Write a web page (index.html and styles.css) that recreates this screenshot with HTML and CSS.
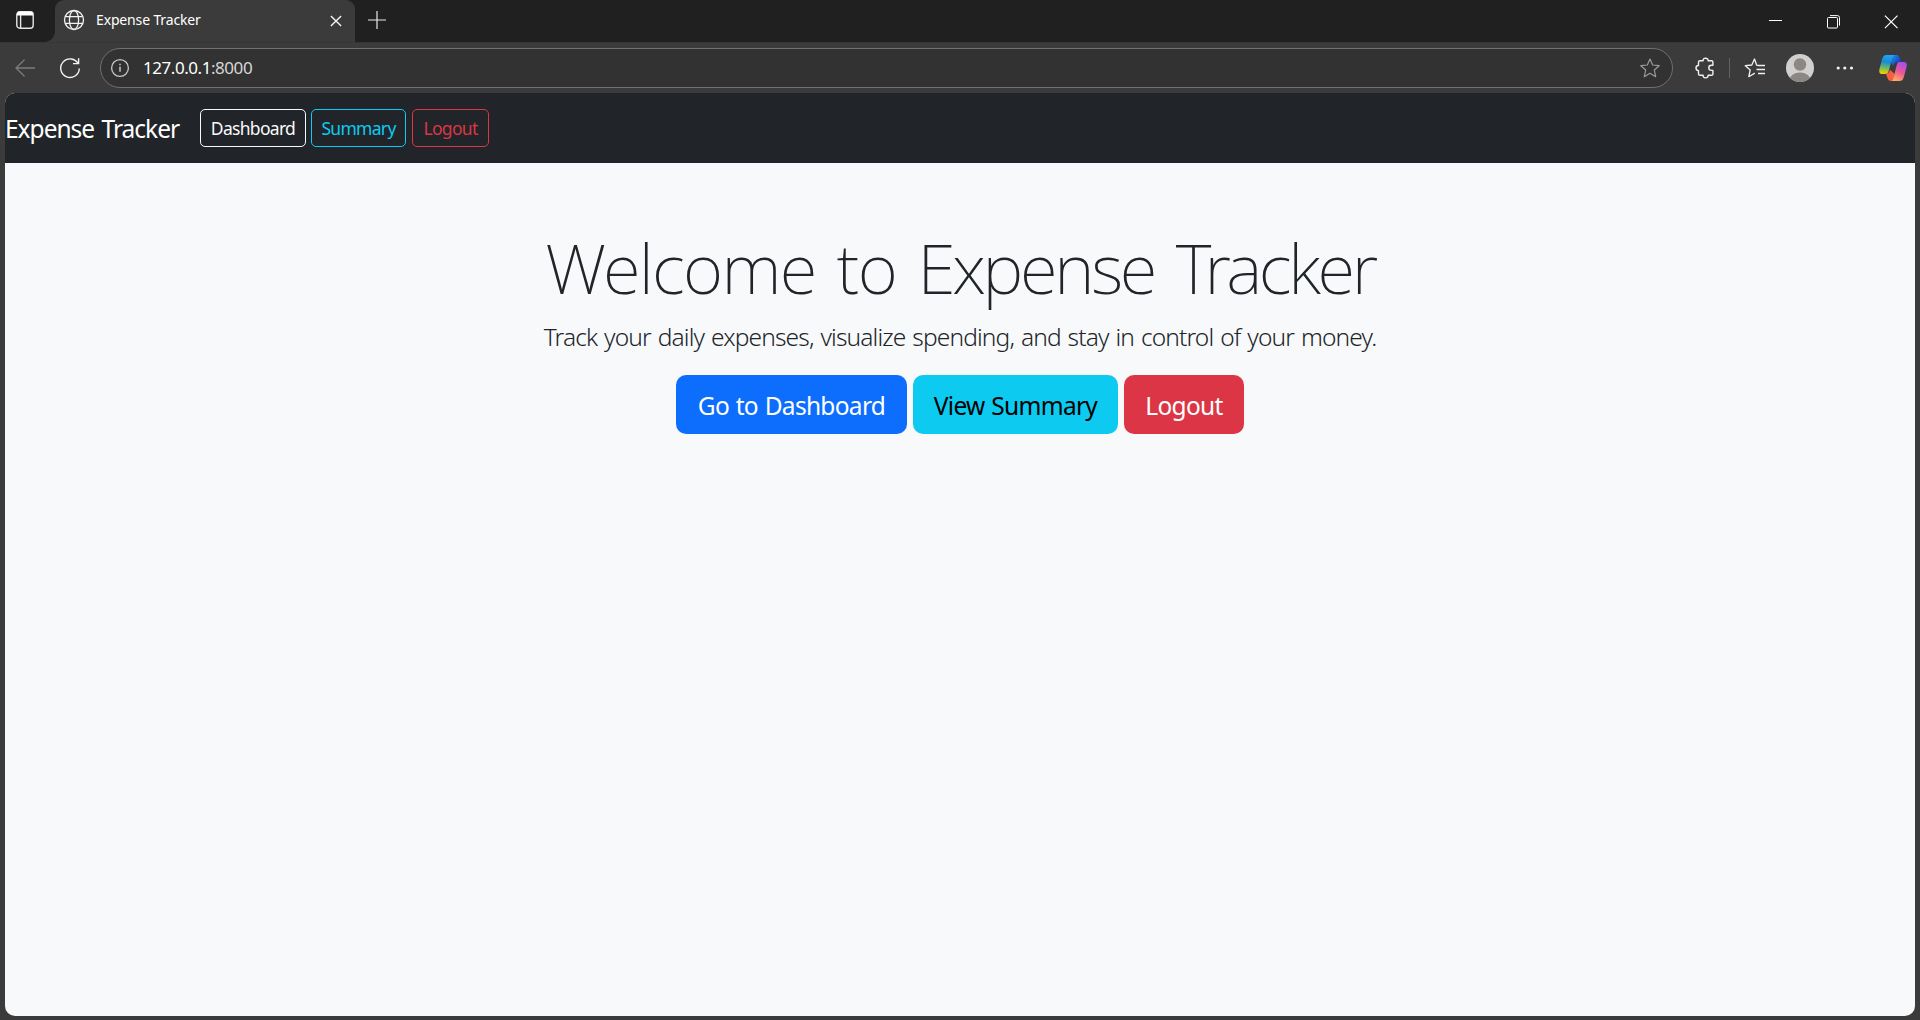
FILE: index.html
```html
<!DOCTYPE html>
<html lang="en">
<head>
<meta charset="utf-8">
<title>Expense Tracker</title>
<link rel="stylesheet" href="styles.css">
</head>
<body>
<div class="window">
  <div class="tabstrip">
    <div class="workspace">
      <svg width="18" height="18" viewBox="0 0 18 18" fill="none" stroke="#e6e6e6" stroke-width="1.4"><rect x=".8" y=".8" width="16.4" height="16.4" rx="3"/><path d="M1 3.3h16M1.500 2h15" stroke="#fff" stroke-width="2.600"/><path d="M4.600 4v13"/></svg>
    </div>
    <div class="tab">
      <svg class="globe" width="22" height="22" viewBox="0 0 22 22" fill="none" stroke="#f2f2f2" stroke-width="1.3"><circle cx="11" cy="11" r="9.5"/><ellipse cx="11" cy="11" rx="4.6" ry="9.5"/><path d="M2.3 7.6h17.4M2.3 14.4h17.4"/></svg>
      <span class="tab-title">Expense Tracker</span>
      <svg class="tab-close" width="12" height="12" viewBox="0 0 12 12" stroke="#f5f5f5" stroke-width="1.4"><path d="M.9.9l10.2 10.2M11.1.9L.9 11.1"/></svg>
    </div>
    <svg class="new-tab" width="18" height="18" viewBox="0 0 18 18" stroke="#e8e8e8" stroke-width="1.2"><path d="M9 0v18M0 9h18"/></svg>
    <div class="controls">
      <svg width="14" height="14" viewBox="0 0 14 14" stroke="#fff"><path d="M1 5.5h13"/></svg>
      <svg width="14" height="14" viewBox="0 0 14 14" fill="none" stroke="#fff"><rect x="1.500" y="2.500" width="10" height="10.500" rx="1"/><path d="M4 .6h7.500a2 2 0 0 1 2 2v8"/></svg>
      <svg width="14" height="14" viewBox="0 0 14 14" stroke="#fff" stroke-width="1.2"><path d="M.9.6l12.600 12.600M13.500.6L.9 13.200"/></svg>
    </div>
  </div>
  <div class="toolbar">
    <svg class="back" width="20" height="18" viewBox="0 0 20 18" fill="none" stroke="#7c7c7c" stroke-width="1.3"><path d="M20 9H1M9.5.7L1 9l8.500 8.300"/></svg>
    <svg class="reload" width="22" height="22" viewBox="0 0 22 22" fill="none" stroke="#f2f2f2" stroke-width="1.4"><path d="M19.300 7A9.300 9.300 0 1 0 20.300 11.500M14 6.600h5.600V1.200"/></svg>
    <div class="address">
      <svg width="20" height="20" viewBox="0 0 20 20" fill="none" stroke="#c8c8c8" stroke-width="1.300"><circle cx="10" cy="10" r="8.400"/><path d="M10 8.800v5M10 5.800v1.500" stroke-width="1.500"/></svg>
      <span class="url">127.0.0.1<span class="port">:8000</span></span>
      <svg width="20" height="20" viewBox="0 0 20 20" fill="none" stroke="#9a9a9a" stroke-width="1.200" stroke-linejoin="round"><path d="M10 1l2.700 6 6.500.7-4.900 4.300 1.400 6.700L10 15.300l-5.700 3.400 1.400-6.700L.8 7.700l6.500-.7z"/></svg>
    </div>
    <div class="actions">
      <svg width="20" height="22" viewBox="0 0 20 22" fill="none" stroke="#f0f0f0" stroke-width="1.400" stroke-linejoin="round"><path d="M3.500 5.200c0-.8.500-1.400 1.400-1.400h3.200C8 2 9 1.200 10.600 1.200S13.200 2 13.100 3.800h3.500c.8 0 1.300.5 1.300 1.400v3h-1.400c-1.700 0-2.700 1-2.700 2.600s1 2.600 2.700 2.600h1.400v3.500c0 .8-.5 1.400-1.300 1.400h-3.500c.1 1.800-.9 2.600-2.500 2.600s-2.600-.8-2.500-2.600H4.900c-.9 0-1.400-.6-1.400-1.400v-3.300C1.800 13.500 1 12.400 1 11s.8-2.500 2.500-2.500z"/></svg>
      <span class="divider"></span>
      <svg class="favorites" width="22" height="20" viewBox="0 0 22 20" fill="none" stroke="#f0f0f0" stroke-width="1.300" stroke-linejoin="round"><path d="M14.500 7.500l-1.800-.3L10.500 1 7.800 7l-6.500.7 4.900 4.300-1.400 6.700 6-3.600M14 7.500h7M12.500 11.500H21M14 15.500h7"/></svg>
      <svg class="avatar" width="28" height="28" viewBox="0 0 28 28"><defs><clipPath id="round"><circle cx="14" cy="14" r="14"/></clipPath></defs><g clip-path="url(#round)"><path fill="#d2d0ce" d="M0 0h28v28H0z"/><circle cx="14" cy="10.500" r="6.200" fill="#8b8785"/><ellipse cx="14" cy="26" rx="10.500" ry="7.500" fill="#8b8785"/></g></svg>
      <svg class="more" width="18" height="4" viewBox="0 0 18 4" fill="#f0f0f0"><circle cx="2.200" cy="2" r="1.600"/><circle cx="8.800" cy="2" r="1.600"/><circle cx="15.500" cy="2" r="1.600"/></svg>
      <svg class="copilot" width="28" height="26" viewBox="0 0 28 26">
        <defs>
          <linearGradient id="blue" x1="0" y1="0" x2=".9" y2=".5"><stop stop-color="#25b8ee"/><stop offset="1" stop-color="#1747c9"/></linearGradient>
          <linearGradient id="left" x1=".4" y1="0" x2=".3" y2="1"><stop stop-color="#21a5f5"/><stop offset=".35" stop-color="#168bd8"/><stop offset=".7" stop-color="#76bd58"/><stop offset="1" stop-color="#ffd000"/></linearGradient>
          <linearGradient id="right" x1=".7" y1="0" x2=".3" y2="1"><stop stop-color="#a34ff2"/><stop offset=".5" stop-color="#ee5793"/><stop offset="1" stop-color="#ffb05c"/></linearGradient>
        </defs>
        <path fill="url(#blue)" d="M7 0h10c3 0 3.600 2 4.400 4.500L22 7h-3c-3 0-4 1.500-5 4l-1.500-3z"/>
        <path fill="#f65f40" d="M6 18.800c3 0 4.500-1.500 5-4l3.500 3L16 20l-2 6h-2c-3 0-3.500-2.500-5-7.200z"/>
        <path fill="url(#left)" d="M7.500 0H16c-2 .5-2.700 2.500-3.500 5.500L10 15c-.8 3-2 4-4.500 4H3c-2.500 0-3.200-2-2.500-5L3 4.500C3.800 1.500 5 0 7.500 0z"/>
        <path fill="url(#right)" d="M20.500 7H25c2.600 0 3.300 2 2.500 5L25 21.500c-.8 3-2 4.500-4.500 4.500H12c2 0 2-1.500 2.700-4L17.500 11c.7-2.800 1-4 3-4z"/>
      </svg>
    </div>
  </div>
  <div class="page">
    <nav class="navbar">
      <span class="brand">Expense Tracker</span>
      <a class="btn btn-light">Dashboard</a>
      <a class="btn btn-info">Summary</a>
      <a class="btn btn-danger">Logout</a>
    </nav>
    <main class="hero">
      <h1>Welcome to <span class="product">Expense Tracker</span></h1>
      <p>Track your daily expenses, visualize spending, and stay in control of your money.</p>
      <div class="cta-row">
        <a class="cta cta-primary">Go to Dashboard</a>
        <a class="cta cta-info">View Summary</a>
        <a class="cta cta-danger">Logout</a>
      </div>
    </main>
  </div>
</div>
</body>
</html>
```
FILE: styles.css
```css
* { box-sizing: border-box; }
body { margin: 0; font-family: "Noto Sans", "Open Sans", sans-serif; white-space: nowrap; }
svg { display: block; flex: none; }
.window { width: 1920px; height: 1020px; background: #3b3b3b; display: flex; flex-direction: column; overflow: hidden; }
.tabstrip { height: 42px; background: #202020; display: flex; flex: none; }
.workspace { width: 55px; padding: 11px 0 0 16px; background: radial-gradient(circle at 0 0, #202020 9.5px, #3b3b3b 10px) 45px 32px / 10px 10px no-repeat; }
.tab { width: 300px; height: 42px; background: #3b3b3b; border-radius: 9px 9px 0 0; display: flex; align-items: center; padding: 0 13px 2px 8px; }
.tab-title { flex: 1; margin: -1px 0 0 11px; color: #fff; font-size: 14px; letter-spacing: -.15px; }
.tab-close { margin-top: 1px; }
.new-tab { margin: 11px 0 0 13px; }
.controls { margin-left: auto; display: flex; gap: 44px; padding: 15px 22px 0 0; }
.toolbar { height: 51px; flex: none; display: flex; align-items: center; padding: 0 12px 0 15px; border-top: 1px solid #363636; background: radial-gradient(circle at 10px 0, transparent 10px, transparent) no-repeat; }
.reload { margin-left: 24px; }
.address { width: 1573px; height: 40px; margin-left: 19px; border: 1px solid #707070; border-radius: 20px; background: #323232; display: flex; align-items: center; padding: 0 12px 0 9px; }
.url { flex: 1; margin: -1px 0 0 13px; color: #fff; font-size: 17px; letter-spacing: -.45px; }
.port { color: #d6d6d6; }
.actions { display: flex; align-items: center; margin-left: 22px; }
.divider { width: 1px; height: 20px; margin: 0 15px 0 14px; background: #626262; }
.favorites { margin-left: -1px; }
.avatar { margin-left: 20px; }
.more { margin-left: 22px; }
.copilot { margin-left: 25px; }
.page { width: 1910px; height: 922.5px; margin-left: 5px; border-radius: 10px; overflow: hidden; background: #f8f9fb; }
.navbar { height: 70px; background: #212529; display: flex; align-items: center; }
.brand { width: 195px; color: #fff; font-size: 24.5px; letter-spacing: -1px; word-spacing: 2px; }
.btn { height: 38px; line-height: 37px; border: 1px solid; border-radius: 5px; text-align: center; font-size: 17.5px; letter-spacing: -.7px; }
.btn-light { width: 106px; color: #f8f9fa; }
.btn-info { width: 95px; margin-left: 5px; color: #0dcaf0; }
.btn-danger { width: 77px; margin-left: 6px; color: #dc3545; }
.hero { padding-top: 62px; text-align: center; color: #212529; }
h1 { margin: 0; font-weight: 250; font-size: 69px; line-height: 84px; letter-spacing: -1.7px; word-spacing: 5px; }
.product { letter-spacing: -3.3px; word-spacing: 7px; }
p { margin: 9px 0 0; font-weight: 300; font-size: 24.5px; line-height: 38px; letter-spacing: -.85px; word-spacing: 1.3px; }
.cta-row { display: flex; justify-content: center; gap: 6px; margin-top: 19px; }
.cta { height: 59px; line-height: 61px; border-radius: 10px; font-size: 24.5px; letter-spacing: -.7px; word-spacing: 1px; color: #fff; }
.cta-primary { width: 231px; background: #0d6efd; }
.cta-info { width: 205px; background: #0dcaf0; color: #000; }
.cta-danger { width: 120px; background: #dc3545; }
```
